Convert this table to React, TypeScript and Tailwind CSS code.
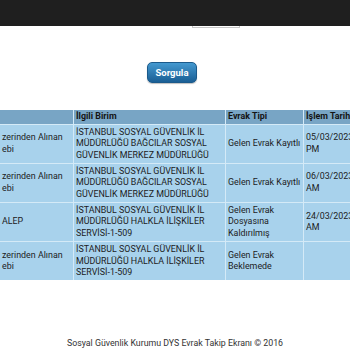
import React from "react";

const rows = [
  {
    c1: ["zerinden Alınan", "ebi"],
    c2: "İSTANBUL SOSYAL GÜVENLİK İL MÜDÜRLÜĞÜ BAĞCILAR SOSYAL GÜVENLİK MERKEZ MÜDÜRLÜĞÜ",
    c3: "Gelen Evrak Kayıtlı",
    c4: ["05/03/2023", "PM"],
  },
  {
    c1: ["zerinden Alınan", "ebi"],
    c2: "İSTANBUL SOSYAL GÜVENLİK İL MÜDÜRLÜĞÜ BAĞCILAR SOSYAL GÜVENLİK MERKEZ MÜDÜRLÜĞÜ",
    c3: "Gelen Evrak Kayıtlı",
    c4: ["06/03/2023", "AM"],
  },
  {
    c1: ["ALEP"],
    c2: "İSTANBUL SOSYAL GÜVENLİK İL MÜDÜRLÜĞÜ HALKLA İLİŞKİLER SERVİSİ-1-509",
    c3: "Gelen Evrak Dosyasına Kaldırılmış",
    c4: ["24/03/2023", "AM"],
  },
  {
    c1: ["zerinden Alınan", "ebi"],
    c2: "İSTANBUL SOSYAL GÜVENLİK İL MÜDÜRLÜĞÜ HALKLA İLİŞKİLER SERVİSİ-1-509",
    c3: "Gelen Evrak Beklemede",
    c4: [],
  },
];

const cell =
  "bg-[#a8d2ec] flex items-center px-[2px] py-[1.5px] text-[#1c1c1c]";

export default function App() {
  return (
    <div
      className="w-[350px] h-[350px] bg-white overflow-hidden flex flex-col"
      style={{ fontFamily: "Roboto, 'Noto Sans', sans-serif" }}
    >
      <div className="h-[26px] bg-[#1f1f1f] shrink-0" />
      <div className="h-[2px] ml-[192px] w-[48px] border-x border-b border-[#c6c6c6] shrink-0" />
      <div className="mt-[34px] ml-[147px] shrink-0">
        <button className="w-[50px] h-[21px] rounded-[5px] border border-[#1b5a8b] bg-gradient-to-b from-[#4499d0] to-[#1a5f95] text-white text-[9.5px] font-bold leading-none flex items-center justify-center shadow-[0_1px_1px_rgba(0,0,0,0.25)]">
          Sorgula
        </button>
      </div>
      <div className="mt-[27px] w-[350px] overflow-hidden shrink-0">
        <div className="grid grid-cols-[73px_151px_77px_90px] gap-px bg-[#d4eaf7] w-max text-[8.9px] leading-[11.7px]">
          <div className="bg-[#78a5c5] h-[14px]" />
          <div className="bg-[#78a5c5] h-[14px] flex items-center px-[2px] font-bold text-[#141414]">İlgili Birim</div>
          <div className="bg-[#78a5c5] h-[14px] flex items-center px-[2px] font-bold text-[#141414]">Evrak Tipi</div>
          <div className="bg-[#78a5c5] h-[14px] flex items-center px-[2px] font-bold text-[#141414]">İşlem Tarihi</div>
          {rows.map((r, i) => (
            <React.Fragment key={i}>
              <div className={cell}>
                <div>
                  {r.c1.map((t, j) => (
                    <div key={j}>{t}</div>
                  ))}
                </div>
              </div>
              <div className={cell}>
                <div>{r.c2}</div>
              </div>
              <div className={cell}>
                <div>{r.c3}</div>
              </div>
              <div className={cell}>
                <div className="whitespace-nowrap">
                  {r.c4.map((t, j) => (
                    <div key={j}>{t}</div>
                  ))}
                </div>
              </div>
            </React.Fragment>
          ))}
        </div>
      </div>
      <div className="mt-[57px] text-center text-[8.8px] leading-[12px] text-[#333]">
        Sosyal Güvenlik Kurumu DYS Evrak Takip Ekranı © 2016
      </div>
    </div>
  );
}
